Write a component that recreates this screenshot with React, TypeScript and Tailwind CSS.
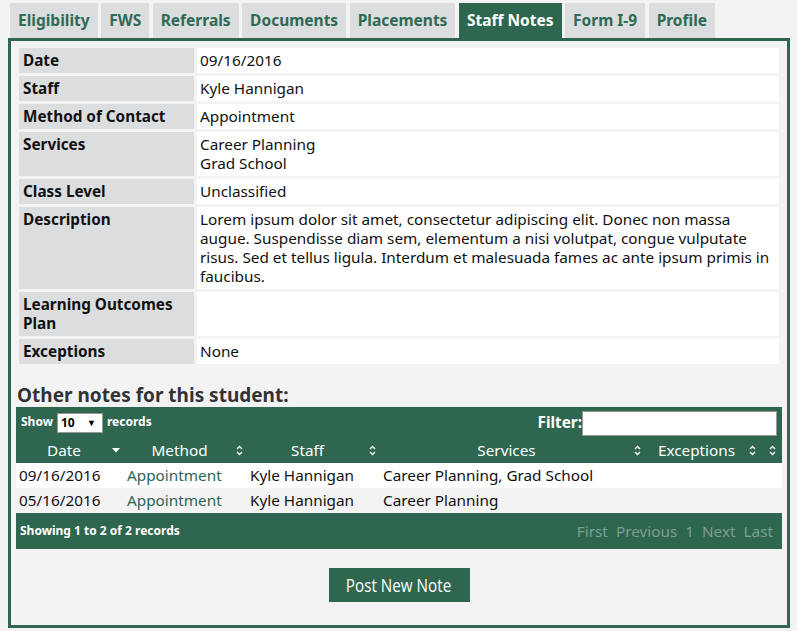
import React from "react";

function SortBoth() {
  return (
    <svg width="7" height="11" viewBox="0 0 7 11" className="block">
      <path d="M1 4 L3.5 1.5 L6 4" fill="none" stroke="white" strokeWidth="1.4" />
      <path d="M1 7 L3.5 9.5 L6 7" fill="none" stroke="white" strokeWidth="1.4" />
    </svg>
  );
}

function SortDesc() {
  return (
    <svg width="8" height="5" viewBox="0 0 8 5" className="block">
      <path d="M0 0 L8 0 L4 4.5 Z" fill="white" />
    </svg>
  );
}

const tabs = ["Eligibility", "FWS", "Referrals", "Documents", "Placements", "Staff Notes", "Form I-9", "Profile"];

const details: { label: React.ReactNode; value: React.ReactNode }[] = [
  { label: "Date", value: "09/16/2016" },
  { label: "Staff", value: "Kyle Hannigan" },
  { label: "Method of Contact", value: "Appointment" },
  {
    label: "Services",
    value: (
      <>
        Career Planning
        <br />
        Grad School
      </>
    ),
  },
  { label: "Class Level", value: "Unclassified" },
  {
    label: "Description",
    value:
      "Lorem ipsum dolor sit amet, consectetur adipiscing elit. Donec non massa augue. Suspendisse diam sem, elementum a nisi volutpat, congue vulputate risus. Sed et tellus ligula. Interdum et malesuada fames ac ante ipsum primis in faucibus.",
  },
  {
    label: (
      <>
        Learning Outcomes
        <br />
        Plan
      </>
    ),
    value: "",
  },
  { label: "Exceptions", value: "None" },
];

const cols = "grid grid-cols-[108px_123px_133px_265px_115px_21px]";

export default function App() {
  return (
    <div
      className="w-[797px] h-[631px] bg-[#f3f3f3] pt-[3px] pl-[8px] text-[#111]"
      style={{ fontFamily: '"Noto Sans", "Open Sans", sans-serif' }}
    >
      {/* Tabs */}
      <div className="flex gap-[3.5px] pl-[2px] h-[35px] items-stretch">
        {tabs.map((t) =>
          t === "Staff Notes" ? (
            <div
              key={t}
              className="px-[8px] bg-[#2f6650] text-white font-bold text-[15.5px] leading-[35px] h-[38px] relative z-10"
            >
              {t}
            </div>
          ) : (
            <div key={t} className="px-[8px] bg-[#dcdddf] text-[#2f6a55] font-bold text-[15.5px] leading-[35px]">
              {t}
            </div>
          )
        )}
      </div>

      {/* Panel */}
      <div className="w-[782px] h-[590px] border-[3px] border-[#2f6650] px-[5px] pt-[4px]">
        <table className="w-full border-separate border-spacing-[3px] text-[15.3px] leading-[19px]">
          <tbody>
            {details.map((d, i) => (
              <tr key={i}>
                <td className="w-[175px] bg-[#dcdddf] font-bold align-top pl-[4px] py-[3px]">{d.label}</td>
                <td className="bg-white align-top pl-[3px] pr-[4px] py-[3px]">{d.value}</td>
              </tr>
            ))}
          </tbody>
        </table>

        <h2 className="text-[19px] leading-[22px] font-bold text-[#333] pl-[1px] mt-[17px]">
          Other notes for this student:
        </h2>

        {/* Data table */}
        <div className="bg-[#2f6650] mt-[1px]">
          <div className="flex items-center h-[30px] pl-[5px] pr-[5px]">
            <span className="text-white font-bold text-[12px]">Show</span>
            <div className="ml-[4px] w-[46px] h-[20px] bg-white border border-[#999] flex items-center justify-between px-[3px] mt-[1px]">
              <span className="text-black font-bold text-[12px] leading-none">10</span>
              <span className="text-black text-[9px] leading-none pr-[3px]">▼</span>
            </div>
            <span className="ml-[4px] text-white font-bold text-[12px]">records</span>
            <div className="flex-1" />
            <span className="text-white font-bold text-[15.3px]">Filter:</span>
            <div className="w-[195px] h-[25px] bg-white border border-[#999] mt-[2px]" />
          </div>
          <div className={`${cols} h-[26px] text-white text-[15.3px] leading-[19px]`}>
            {[
              ["Date", true],
              ["Method", false],
              ["Staff", false],
              ["Services", false],
              ["Exceptions", false],
            ].map(([label, desc]) => (
              <div key={label as string} className="relative flex items-center justify-center pl-[8px] pr-[20px]">
                <span>{label as string}</span>
                <span className="absolute right-[4px] top-[10px]">
                  {desc ? (
                    <div className="mt-[1px]">
                      <SortDesc />
                    </div>
                  ) : (
                    <div className="-mt-[2px]">
                      <SortBoth />
                    </div>
                  )}
                </span>
              </div>
            ))}
            <div className="relative">
              <span className="absolute right-[5px] top-[8px]">
                <SortBoth />
              </span>
            </div>
          </div>
          <div className={`${cols} bg-white h-[25px] text-[15.3px] leading-[25px]`}>
            <div className="pl-[3px]">09/16/2016</div>
            <div className="pl-[3px] text-[#2f6650]">Appointment</div>
            <div className="pl-[3px]">Kyle Hannigan</div>
            <div className="pl-[3px] whitespace-nowrap">Career Planning, Grad School</div>
            <div />
            <div />
          </div>
          <div className={`${cols} bg-[#f3f3f3] h-[25px] text-[15.3px] leading-[25px]`}>
            <div className="pl-[3px]">05/16/2016</div>
            <div className="pl-[3px] text-[#2f6650]">Appointment</div>
            <div className="pl-[3px]">Kyle Hannigan</div>
            <div className="pl-[3px]">Career Planning</div>
            <div />
            <div />
          </div>
          <div className="flex items-center justify-between h-[36px] pl-[4px] pr-[9px]">
            <span className="text-white font-bold text-[12px]">Showing 1 to 2 of 2 records</span>
            <div className="flex gap-[8px] text-[15.3px] text-[#7d9f8e]">
              <span>First</span>
              <span>Previous</span>
              <span>1</span>
              <span>Next</span>
              <span>Last</span>
            </div>
          </div>
        </div>

        <div className="flex justify-center mt-[19px]">
          <button
            className="w-[141px] h-[34px] bg-[#2f6650] text-white flex items-center justify-center overflow-hidden"
            style={{ fontFamily: '"Open Sans", sans-serif' }}
          >
            <span className="inline-block whitespace-nowrap text-[17.5px] leading-[34px] scale-x-[0.87]">Post New Note</span>
          </button>
        </div>
      </div>
    </div>
  );
}
